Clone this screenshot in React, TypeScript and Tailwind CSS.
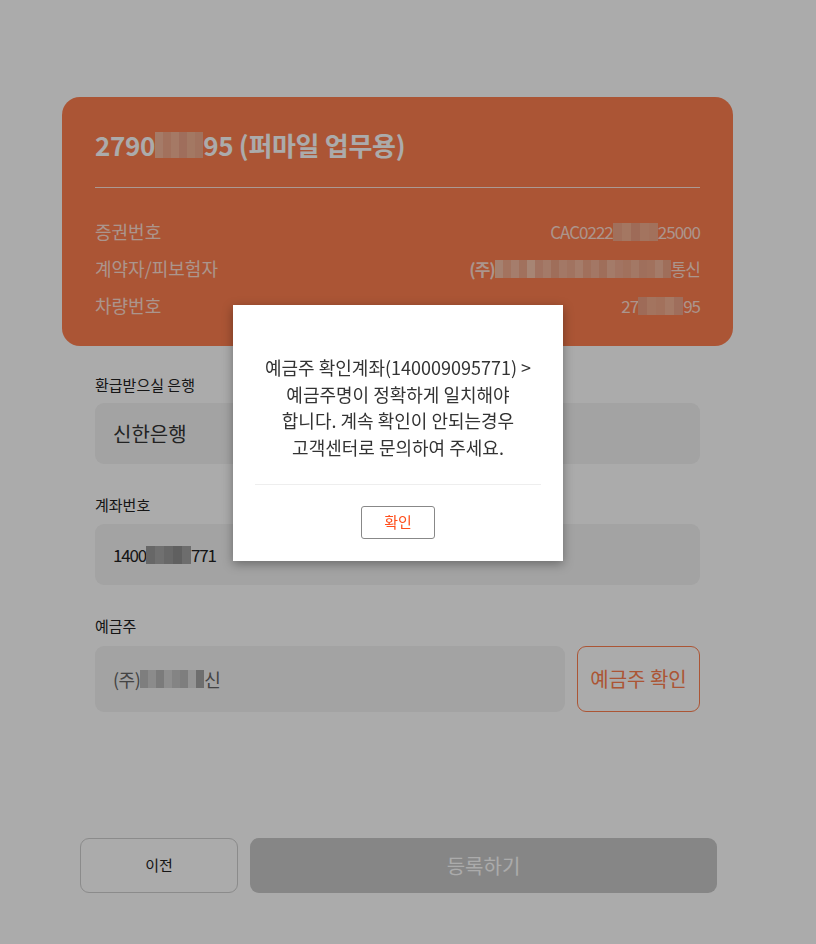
import React from 'react';

const font = { fontFamily: '"Segoe UI", "Noto Sans CJK KR", "Noto Sans", sans-serif' };

function Mosaic({ cells, w = 8, h = 18 }: { cells: string[]; w?: number; h?: number }) {
  return (
    <span className="inline-flex align-middle">
      {cells.map((c, i) => (
        <span key={i} className="inline-block" style={{ backgroundColor: c, width: w, height: h }} />
      ))}
    </span>
  );
}

function InfoRow({ label, children }: { label: string; children: React.ReactNode }) {
  return (
    <div className="flex items-center justify-between h-[37px] text-[18px] text-white/75">
      <span>{label}</span>
      <span className="flex items-center text-[17px] tracking-[-1px]">{children}</span>
    </div>
  );
}

const warm = ['#f0a88a', '#f5b293', '#eca083', '#f3ad8e', '#f2a98a', '#f7b597', '#eda58a', '#f4b394'];

export default function App() {
  return (
    <div className="relative min-h-[944px] bg-white" style={font}>
      <div className="w-[795px] flex justify-center pt-[97px]">
        <div className="w-[671px]">
          <div className="bg-[#ff7f4f] rounded-[18px] px-[33px] pt-[28px] pb-[22px]">
            <h1 className="text-[26px] font-bold text-white leading-[40px] flex items-center tracking-[-0.3px]">
              2790
              <Mosaic cells={['#f6b89c', '#f2a98b', '#f7b597', '#eda58a', '#f4b394', '#f1ab8d']} h={26} />
              95 (퍼마일 업무용)
            </h1>
            <div className="h-px bg-white/80 mt-[22px] mb-[25px]" />
            <InfoRow label="증권번호">
              CAC0222
              <Mosaic cells={warm.slice(0, 5)} w={9} />
              25000
            </InfoRow>
            <InfoRow label="계약자/피보험자">
              <span className="font-bold">(주)</span>
              <Mosaic
                cells={['#f7c0a8', '#f3ac8e', '#f6bba2', '#f1a98b', '#fac6ae', '#f0ab8f', '#f5b69b', '#eea587', '#f4b499', '#f1ac90', '#f6b99e', '#f0a789', '#f3b297', '#eea587', '#f5b89d', '#f2ae92', '#f1a98b', '#f4b397', '#eda68a', '#f1a98b', '#f5b89d', '#eea587']}
              />
              통신
            </InfoRow>
            <InfoRow label="차량번호">
              27
              <Mosaic cells={warm.slice(2, 7)} w={9} />
              95
            </InfoRow>
          </div>

          <div className="px-[33px] pt-[28px]">
            <label className="block text-[15px] text-[#222] leading-[22px]">환급받으실 은행</label>
            <div className="mt-[7px] h-[61px] rounded-[9px] bg-[#f3f3f3] flex items-center px-[18px] text-[20px] text-[#333]">
              신한은행
            </div>

            <label className="block text-[15px] text-[#222] leading-[22px] mt-[30px]">계좌번호</label>
            <div className="mt-[8px] h-[61px] rounded-[9px] bg-[#f3f3f3] flex items-center px-[18px] text-[17px] text-[#222] tracking-[-1.2px]">
              1400
              <Mosaic cells={['#9a9a9a', '#a8a8a8', '#9c9c9c', '#8f8f8f', '#a3a3a3']} w={9} />
              771
            </div>

            <label className="block text-[15px] text-[#222] leading-[22px] mt-[30px]">예금주</label>
            <div className="mt-[9px] flex gap-[12px]">
              <div className="flex-1 h-[66px] rounded-[9px] bg-[#f3f3f3] flex items-center px-[18px] text-[18px] text-[#666] tracking-[-0.5px]">
                (주)
                <Mosaic cells={['#bdbdbd', '#cfcfcf', '#b8b8b8', '#d6d6d6', '#c5c5c5', '#bdbdbd', '#dedede', '#a5a5a5']} />
                신
              </div>
              <button className="w-[123px] h-[66px] rounded-[9px] border border-[#ff7f4f] text-[#ff7f4f] text-[20px] bg-white">
                예금주 확인
              </button>
            </div>
          </div>

          <div className="flex gap-[12px] pl-[18px] pr-[16px] mt-[126px]">
            <button className="w-[158px] h-[55px] rounded-[9px] border border-[#cfcfcf] text-[15px] text-[#222] bg-white">
              이전
            </button>
            <button className="flex-1 h-[55px] rounded-[9px] bg-[#c8c8c8] text-[20px] text-white">
              등록하기
            </button>
          </div>
        </div>
      </div>

      <div className="fixed inset-0 bg-black/[0.33]" />

      <div className="absolute left-[233px] top-[305px] w-[330px] bg-white shadow-[0_3px_10px_rgba(0,0,0,0.35)] px-[22px] pt-[49px] pb-[22px]">
        <p className="text-center text-[18px] leading-[26.7px] text-[#333]">
          예금주 확인계좌(140009095771) &gt;
          <br />
          예금주명이 정확하게 일치해야
          <br />
          합니다. 계속 확인이 안되는경우
          <br />
          고객센터로 문의하여 주세요.
        </p>
        <div className="h-px bg-[#eeeeee] mt-[23px]" />
        <div className="flex justify-center mt-[21px]">
          <button className="w-[74px] h-[33px] rounded-[3px] border border-[#888] text-[15px] text-[#ff4d1a] bg-white">
            확인
          </button>
        </div>
      </div>
    </div>
  );
}
